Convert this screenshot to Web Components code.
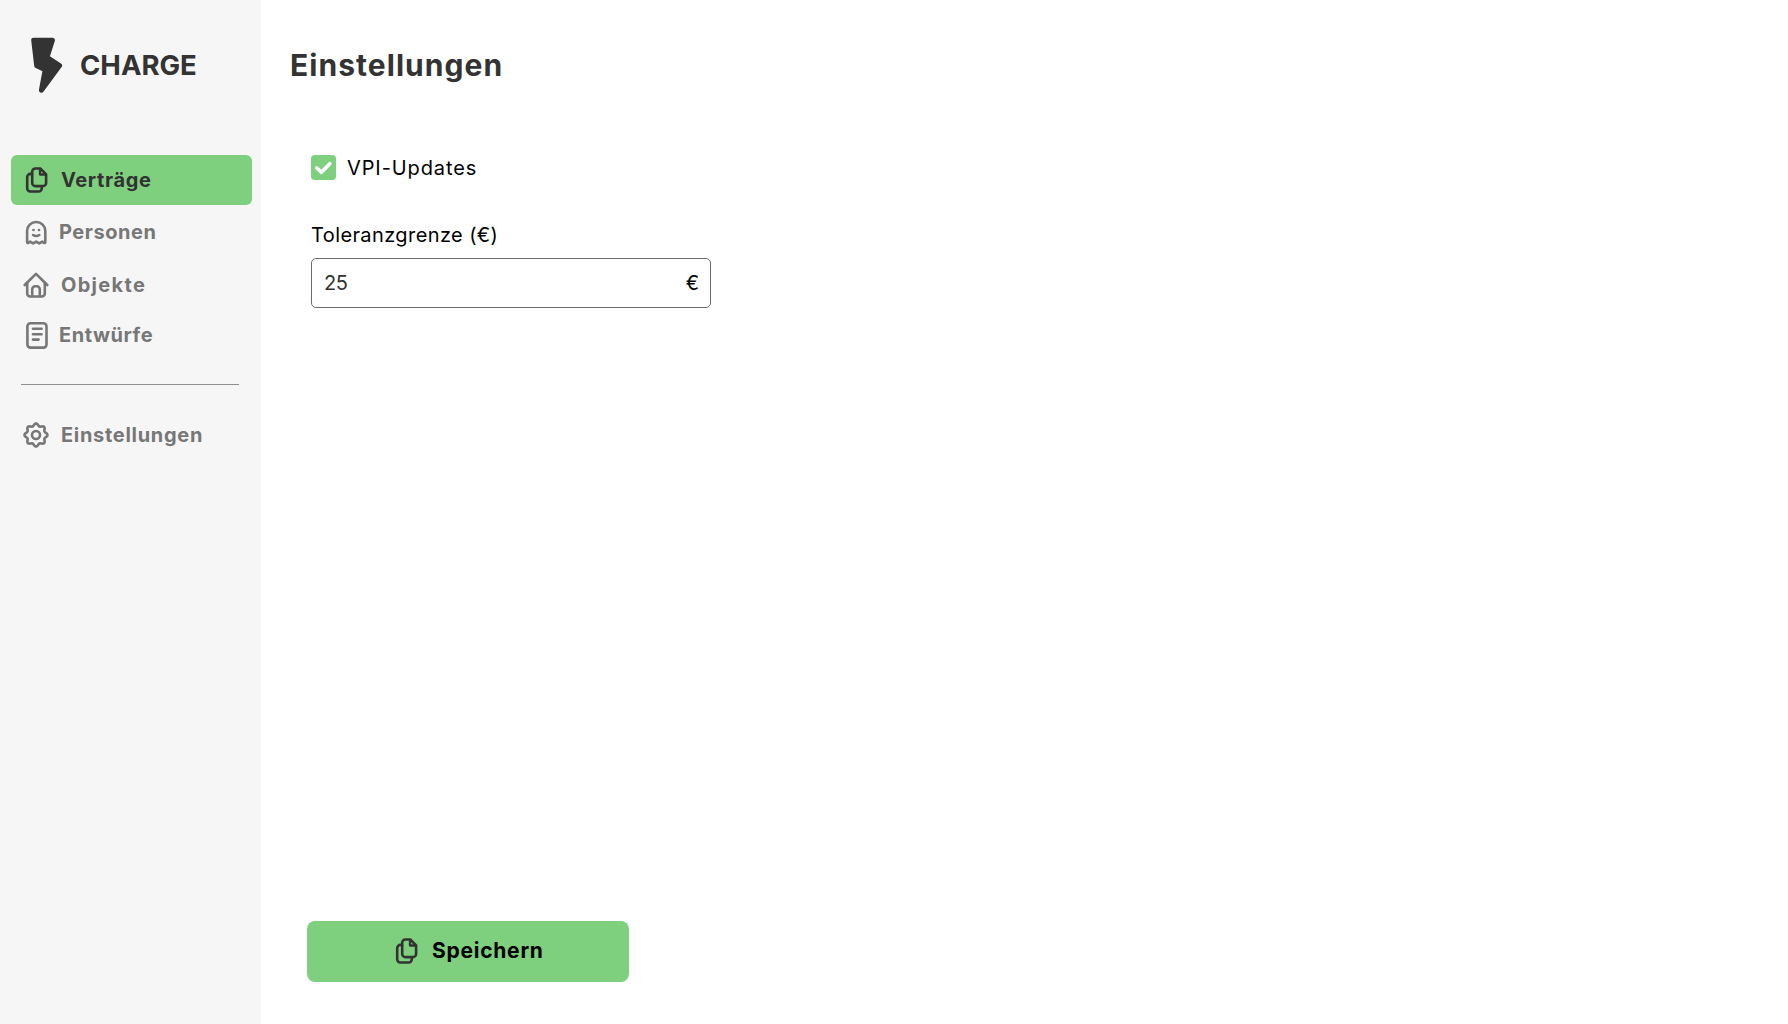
<!DOCTYPE html>
<html lang="de">
<head>
<meta charset="utf-8">
<title>Charge – Einstellungen</title>
<style>
html,body{margin:0;height:100%}
body{font-family:Inter,"Liberation Sans",sans-serif;background:#fff;overflow:hidden}
</style>
</head>
<body>
<charge-app></charge-app>
<script>
const define=(name,html,setup)=>{
  const t=document.createElement('template');
  t.innerHTML=html;
  customElements.define(name,class extends HTMLElement{
    constructor(){super();this.attachShadow({mode:'open'}).append(t.content.cloneNode(true));}
    connectedCallback(){if(setup)setup(this,this.shadowRoot);}
  });
};
// Eight rounded teeth around the centre of the 28px icon box.
const gearPath='M'+Array.from({length:128},(_,i)=>{
  const a=i/128*2*Math.PI, r=10.3+1.15*Math.cos(8*a);
  return (14+r*Math.cos(a)).toFixed(2)+' '+(14+r*Math.sin(a)).toFixed(2);
}).join('L')+'Z';
const icons={
  copy:'<path d="M18.3 2.5H13.4a3.2 3.2 0 0 0-3.2 3.2v11.2a3.2 3.2 0 0 0 3.2 3.2h7.5a3.2 3.2 0 0 0 3.2-3.2V8.3Z"/><path d="M18 3v5.5h5.6" stroke-width="2.3"/><path d="M10 7.9H8.4a3.2 3.2 0 0 0-3.2 3.2v11.2a3.2 3.2 0 0 0 3.2 3.2h8.2a3.2 3.2 0 0 0 3.2-3.2v-2"/>',
  ghost:'<path d="M5.1 24.2V12.8a9.1 8.8 0 0 1 18.2 0v11.4c0 .8-.8 1-1.5.5l-1.5-1.1-3 1.8-3.1-1.8-3.1 1.8-3-1.8-1.5 1.1c-.7.5-1.5.3-1.5-.5Z"/><path d="M11.5 12h.01M17 12h.01" stroke-width="2.7"/><path d="M11.1 17q3.1 2.1 6.2 0"/>',
  home:'<path d="M2.7 14 14 2.9 25.3 14"/><path d="M5.2 12v10.5a3 3 0 0 0 3 3h11.6a3 3 0 0 0 3-3V12"/><path d="M10.2 25v-6.8a3 3 0 0 1 3-3h1.6a3 3 0 0 1 3 3V25"/>',
  doc:'<rect x="5.4" y="2.3" width="19.1" height="24.3" rx="3"/><path d="M11 7.8h8.6M11 13.2h8.6M11 18.6h5.6"/>',
  gear:'<path d="'+gearPath+'"/><circle cx="14" cy="14" r="4"/>'
};
define('line-icon','<style>:host{display:block;width:28px;height:28px;flex:none}svg{display:block;fill:none;stroke:currentColor;stroke-width:2.6;stroke-linecap:round;stroke-linejoin:round}</style><svg width="28" height="28" viewBox="0 0 28 28"></svg>',
  (el,r)=>{r.querySelector('svg').innerHTML=icons[el.getAttribute('name')];});
define('brand-logo','<style>:host{display:flex;align-items:center;gap:16px;height:58px;padding-left:30px;color:#333;font-weight:750;font-size:27.5px}svg{display:block}</style><svg width="34" height="58" viewBox="0 0 34 58"><path d="M3.7 4.3H22.4L17 21.3 29.6 29.6 11.4 54.2 15.2 33.6 6.7 29.8Z" fill="#333" stroke="#333" stroke-width="5" stroke-linejoin="round"/></svg><span><slot></slot></span>');
define('nav-item','<style>:host{display:flex;align-items:center;box-sizing:border-box;height:50px;padding-left:11px;gap:var(--gap,11px);border-radius:6px;color:#777;font-size:20px;font-weight:700}:host([active]){background:#7ed07e;color:#333}span{letter-spacing:var(--ls,0);white-space:nowrap}</style><line-icon></line-icon><span><slot></slot></span>',
  (el,r)=>{const i=document.createElement('line-icon');i.setAttribute('name',el.getAttribute('icon'));r.querySelector('line-icon').replaceWith(i);});
define('side-bar',`<style>
:host{display:flex;flex-direction:column;box-sizing:border-box;width:261px;flex:none;background:#f6f6f6;padding:36px 9px 0 11px}
brand-logo{margin:0 0 61px -11px}
nav{display:flex;flex-direction:column}
hr{width:218px;height:1px;border:0;background:#8f8f8f;margin:24px 0 25px 10px}
</style>
<brand-logo>CHARGE</brand-logo>
<nav>
<nav-item active icon="copy" style="--ls:.62px">Verträge</nav-item>
<nav-item icon="ghost" style="margin-top:2px;--gap:9px;--ls:.55px">Personen</nav-item>
<nav-item icon="home" style="margin-top:3px;--ls:1.3px">Objekte</nav-item>
<nav-item icon="doc" style="--gap:9px;--ls:.55px">Entwürfe</nav-item>
<hr>
<nav-item icon="gear" style="--ls:.7px">Einstellungen</nav-item>
</nav>`);
define('check-box','<style>:host{display:flex;align-items:center;gap:11px;height:25px;font-size:20px;color:#000}i{display:block;width:25px;height:25px;border-radius:4px;background:#7ed07e}span{letter-spacing:.9px}</style><i><svg width="25" height="25" viewBox="0 0 25 25"><path d="M5.8 13 10.4 17.2 18.8 8.8" fill="none" stroke="#fff" stroke-width="3.7" stroke-linecap="round" stroke-linejoin="round"/></svg></i><span><slot></slot></span>');
define('amount-field','<style>:host{display:flex;flex-direction:column;width:400px;font-size:20px;color:#000}label{line-height:24px;letter-spacing:.4px}div{display:flex;justify-content:space-between;align-items:center;box-sizing:border-box;height:50px;margin-top:11px;padding:0 11px 0 12px;border:1px solid #6a6a6a;border-radius:5px}b{font-weight:400;color:#333;letter-spacing:-.4px}</style><label><slot name="label"></slot></label><div><b><slot></slot></b><span>€</span></div>');
define('save-button','<style>:host{display:flex;align-items:center;box-sizing:border-box;width:322px;height:61px;padding:0 0 2px 85px;gap:12px;background:#7ed07e;border-radius:8px;font-size:21px;font-weight:700;color:#000}line-icon{color:#333}span{letter-spacing:.75px}</style><line-icon name="copy"></line-icon><span><slot></slot></span>');
define('settings-page',`<style>
:host{display:flex;flex-direction:column;flex:1;box-sizing:border-box;padding:0 0 42px 46px}
h1{margin:45px 0 0 -17px;font-size:30px;line-height:40px;font-weight:700;color:#333;letter-spacing:1.05px}
check-box{margin:70px 0 0 4px}
amount-field{margin:43px 0 0 4px}
save-button{margin-top:auto}
</style>
<h1>Einstellungen</h1>
<check-box>VPI-Updates</check-box>
<amount-field><span slot="label">Toleranzgrenze (€)</span>25</amount-field>
<save-button>Speichern</save-button>`);
define('charge-app','<style>:host{display:flex;height:100vh;min-height:1024px}</style><side-bar></side-bar><settings-page></settings-page>');
</script>
</body>
</html>
